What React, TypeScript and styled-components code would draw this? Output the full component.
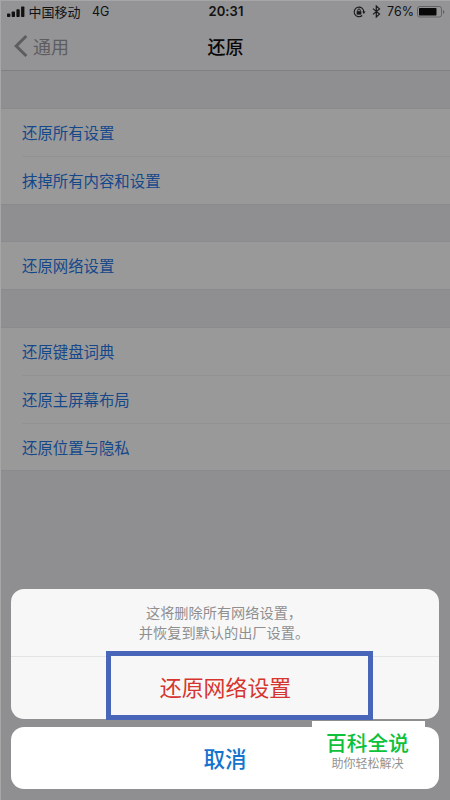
import React from "react";
import styled, { createGlobalStyle } from "styled-components";

const GlobalStyle = createGlobalStyle`
  * { box-sizing: border-box; }
  body { margin: 0; overflow: hidden; }
  button { border: 0; padding: 0; margin: 0; background: none; font: inherit; text-align: inherit; }
`;

const Screen = styled.div`
  position: relative;
  width: 450px;
  height: 800px;
  overflow: hidden;
  background: #8f8f92;
  border-left: 1px solid #a6a6a7;
  border-top: 1px solid #a6a6a7;
  font-family: "Noto Sans CJK SC", sans-serif;
`;

const StatusBar = styled.div`
  display: grid;
  grid-template-columns: 1fr auto 1fr;
  align-items: center;
  height: 21px;
  padding: 0 5px 0 6px;
  background: #949496;
  color: #111;
  font-size: 13px;
  line-height: 21px;
`;

const Carrier = styled.div`
  display: flex;
  align-items: center;
  gap: 3.5px;
`;

const Network = styled.span`
  margin-left: 8px;
  font: 12.5px/21px Inter, sans-serif;
`;

const Clock = styled.div`
  font: 600 13px/21px Inter, sans-serif;
  letter-spacing: 0.1px;
`;

const Indicators = styled.div`
  display: flex;
  align-items: center;
  justify-content: flex-end;
  gap: 6px;
  font: 12.5px/21px Inter, sans-serif;
`;

const Percent = styled.span`
  margin-right: -3px;
`;

const NavBar = styled.header`
  display: grid;
  grid-template-columns: 1fr auto 1fr;
  align-items: center;
  height: 49px;
  padding: 0 12px 1px;
  background: #949496;
  border-bottom: 1px solid #808083;
`;

const BackButton = styled.button`
  display: flex;
  align-items: center;
  gap: 5px;
  color: #5d5d5f;
  font-size: 18px;
`;

const Title = styled.h1`
  margin: 0;
  color: #080808;
  font-size: 18px;
  font-weight: 500;
`;

const Groups = styled.main`
  display: flex;
  flex-direction: column;
  gap: 38.2px;
  padding-top: 37.5px;
`;

const Group = styled.section`
  background: #999;
  box-shadow: 0 -1px #8b8b8d, 0 1px #8a8a8c;
`;

const Row = styled.button`
  display: block;
  width: 428px;
  height: 47.6px;
  margin-left: 21px;
  color: #15488a;
  font-size: 15.4px;
  line-height: 43px;
  & + & { border-top: 1px solid #929294; }
`;

const ActionSheet = styled.div`
  position: absolute;
  left: 10px;
  top: 588px;
  width: 428px;
  display: flex;
  flex-direction: column;
  gap: 8px;
  text-align: center;
`;

const Card = styled.div`
  height: 130px;
  border-radius: 13px;
  background: #f7f7f8;
`;

const Message = styled.p`
  height: 68px;
  margin: 0;
  padding: 13px 2px 0 0;
  border-bottom: 1px solid #e3e4e5;
  color: #8f8f8f;
  font-size: 14.2px;
  line-height: 20px;
  white-space: pre-line;
`;

const ResetButton = styled.button`
  display: block;
  width: 267px;
  height: 69px;
  margin: -6px 0 0 95px;
  padding-right: 28px;
  border: 5px solid #4865b9;
  color: #d6352f;
  font-size: 21.9px;
  line-height: 61px;
  text-align: center;
  background: #f7f7f8;
`;

const CancelButton = styled.button`
  width: 100%;
  height: 62px;
  padding-bottom: 2px;
  border-radius: 13px;
  background: #fff;
  color: #1474cd;
  font-size: 21.5px;
  font-weight: 500;
  line-height: 59px;
  text-align: center;
`;

const Watermark = styled.aside`
  position: absolute;
  left: 311px;
  top: 720px;
  width: 113px;
  height: 60px;
  padding-right: 2px;
  background: #fff;
  text-align: center;
  white-space: nowrap;
`;

const Brand = styled.div`
  margin-top: 7px;
  color: #0dc13a;
  font-size: 20.7px;
  font-weight: 500;
  line-height: 28px;
`;

const Slogan = styled.div`
  color: #929292;
  font-size: 12px;
  line-height: 13px;
`;

const SignalIcon = () => (
  <svg width="18" height="12" viewBox="0 0 18 12" fill="#111">
    <rect x="0" y="7.5" width="3.3" height="3.5" rx=".7" />
    <rect x="4.7" y="5.5" width="3.3" height="5.5" rx=".7" />
    <rect x="9.4" y="3.2" width="3.3" height="7.8" rx=".7" />
    <rect x="14.1" y=".5" width="3.3" height="10.5" rx=".7" />
  </svg>
);

const RotationLockIcon = () => (
  <svg width="13" height="12" viewBox="0 0 13 12" fill="none" stroke="#181818">
    <path d="M9.2 9.5A4.8 4.8 0 1 1 10.8 6" strokeWidth="1.1" />
    <path d="M9.2 5.5h3.3l-1.7 2.4z" fill="#181818" stroke="none" />
    <rect x="3.7" y="5.2" width="4.6" height="3.4" fill="#181818" stroke="none" />
    <path d="M4.7 5.4V4.3a1.3 1.3 0 0 1 2.6 0v1.1" />
  </svg>
);

const BluetoothIcon = () => (
  <svg width="9" height="13" viewBox="0 0 9 13" fill="none" stroke="#181818" strokeWidth="1.2">
    <path d="M1 3.6l6.5 5.5L4.3 12V1l3.2 2.9L1 9.4" />
  </svg>
);

const BatteryIcon = () => (
  <svg width="28" height="12" viewBox="0 0 28 12">
    <rect x=".5" y=".5" width="24" height="10.5" rx="2.2" fill="none" stroke="#626265" />
    <rect x="2" y="2" width="17.5" height="7.5" rx=".8" fill="#080808" />
    <path d="M26 4v4q1.4-.6 1.4-2T26 4z" fill="#626265" />
  </svg>
);

const BackIcon = () => (
  <svg width="15" height="24" viewBox="0 0 15 24" fill="none" stroke="#5d5d5f" strokeWidth="3">
    <path d="M13.3 2L3.2 12l10.1 10" />
  </svg>
);

const settings = [
  ["还原所有设置", "抹掉所有内容和设置"],
  ["还原网络设置"],
  ["还原键盘词典", "还原主屏幕布局", "还原位置与隐私"],
];

export default function App() {
  return (
    <>
      <GlobalStyle />
      <Screen>
        <StatusBar>
          <Carrier><SignalIcon /><span>中国移动</span><Network>4G</Network></Carrier>
          <Clock>20:31</Clock>
          <Indicators>
            <RotationLockIcon />
            <BluetoothIcon />
            <Percent>76%</Percent>
            <BatteryIcon />
          </Indicators>
        </StatusBar>
        <NavBar>
          <BackButton><BackIcon />通用</BackButton>
          <Title>还原</Title>
        </NavBar>
        <Groups>
          {settings.map((items) => (
            <Group key={items[0]}>
              {items.map((label) => <Row key={label}>{label}</Row>)}
            </Group>
          ))}
        </Groups>
        <ActionSheet>
          <Card>
            <Message>{"这将删除所有网络设置，\n并恢复到默认的出厂设置。"}</Message>
            <ResetButton>还原网络设置</ResetButton>
          </Card>
          <CancelButton>取消</CancelButton>
        </ActionSheet>
        <Watermark>
          <Brand>百科全说</Brand>
          <Slogan>助你轻松解决</Slogan>
        </Watermark>
      </Screen>
    </>
  );
}
